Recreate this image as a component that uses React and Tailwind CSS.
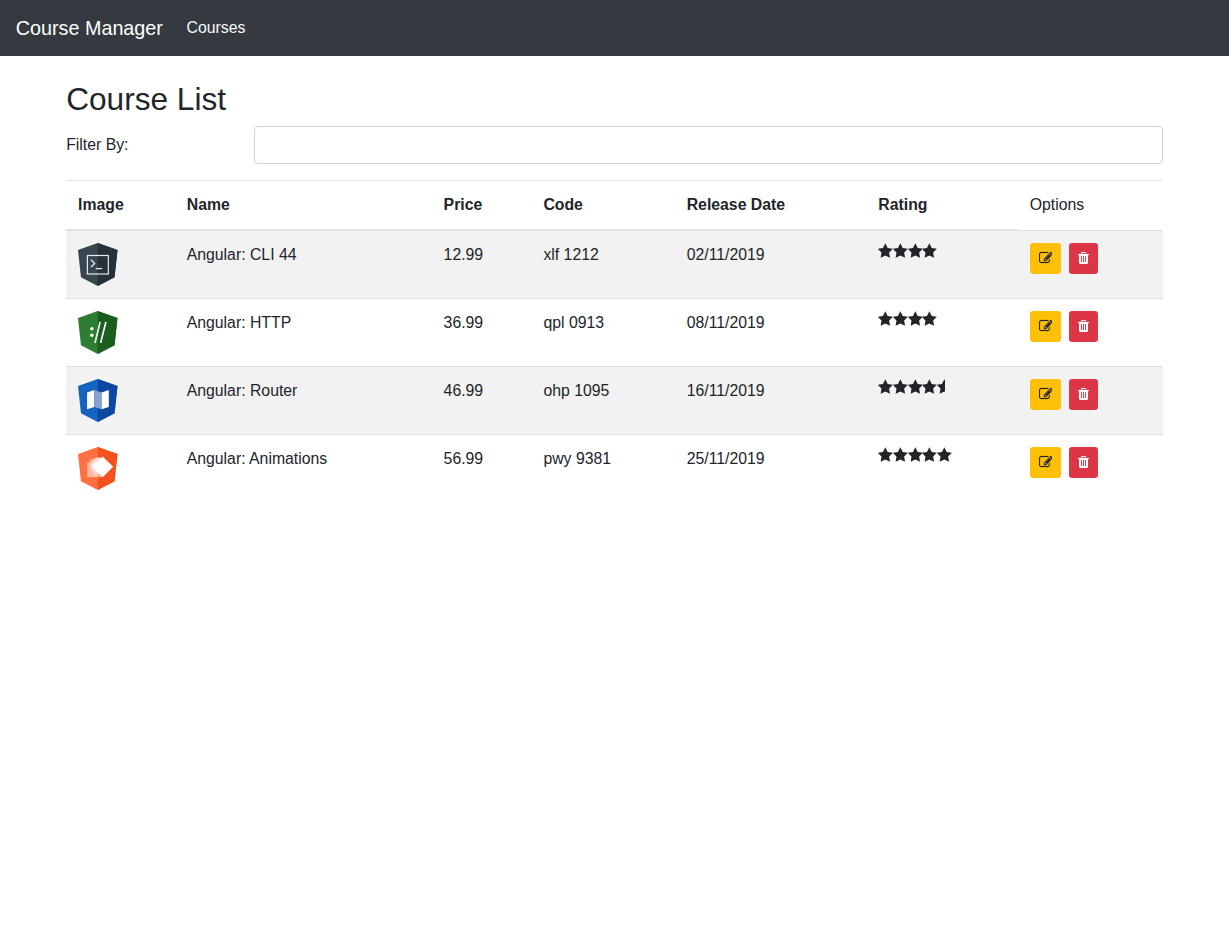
import React from "react";

const EDIT =
  "M888 1184l116-116-152-152-116 116v56h96v96h56zm440-720q-16-16-33 1l-350 350q-17 17-1 33t33-1l350-350q17-17 1-33zm80 594v190q0 119-84.5 203.5t-203.5 84.5h-832q-119 0-203.5-84.5t-84.5-203.5v-832q0-119 84.5-203.5t203.5-84.5h832q63 0 117 25 15 7 18 23 3 17-9 29l-49 49q-14 14-32 8-23-6-45-6h-832q-66 0-113 47t-47 113v832q0 66 47 113t113 47h832q66 0 113-47t47-113v-126q0-13 9-22l64-64q15-15 35-7t20 29zm-96-738l288 288-672 672h-288v-288zm444 132l-92 92-288-288 92-92q28-28 68-28t68 28l152 152q28 28 28 68t-28 68z";
const TRASH =
  "M704 1376v-704q0-14-9-23t-23-9h-64q-14 0-23 9t-9 23v704q0 14 9 23t23 9h64q14 0 23-9t9-23zm256 0v-704q0-14-9-23t-23-9h-64q-14 0-23 9t-9 23v704q0 14 9 23t23 9h64q14 0 23-9t9-23zm256 0v-704q0-14-9-23t-23-9h-64q-14 0-23 9t-9 23v704q0 14 9 23t23 9h64q14 0 23-9t9-23zm-544-992h448l-48-117q-7-9-17-11h-317q-10 2-17 11zm928 32v64q0 14-9 23t-23 9h-96v948q0 83-47 143.5t-113 60.5h-832q-66 0-113-58.5t-47-141.5v-952h-96q-14 0-23-9t-9-23v-64q0-14 9-23t23-9h309l70-167q15-37 54-63t79-26h320q40 0 79 26t54 63l70 167h309q14 0 23 9t9 23z";
const STAR =
  "M832 20L1100 555L1690 640L1265 1070L1365 1670L832 1395L299 1670L399 1070L-26 640L564 555Z";

function Shield({ left, right, children }) {
  return (
    <svg width="39.5" height="43" viewBox="0 0 40 43" preserveAspectRatio="none" className="block">
      <path d="M20 0L0 7L3 34.2L20 43L37 34.2L40 7Z" fill={left} />
      <path d="M20 0L40 7L37 34.2L20 43Z" fill={right} />
      {children}
    </svg>
  );
}

const logos = {
  cli: (
    <Shield left="#37474f" right="#263238">
      <rect x="9.5" y="12.5" width="21.2" height="18.5" fill="none" stroke="#e8eaeb" strokeWidth="1.2" />
      <path d="M13.2 16.8L16.8 20.4L13.2 24" fill="none" stroke="#e0e3e5" strokeWidth="1.4" />
      <path d="M18 25.6H24.5" stroke="#e0e3e5" strokeWidth="1.3" />
    </Shield>
  ),
  http: (
    <Shield left="#2e7d32" right="#1b5e20">
      <circle cx="14" cy="17.7" r="1.8" fill="#fff" />
      <circle cx="14" cy="24.3" r="1.8" fill="#fff" />
      <path d="M22.4 11L17.2 32M28.2 11L22.9 32" fill="none" stroke="#fff" strokeWidth="1.6" />
    </Shield>
  ),
  router: (
    <Shield left="#1565c0" right="#0d47a1">
      <path d="M9.2 13.4L16.4 11V28L9.2 30.2Z" fill="#fff" />
      <path d="M16.4 11L24 13.4V30.2L16.4 28Z" fill="#86a3d0" />
      <path d="M24 13.4L31.2 11V28L24 30.2Z" fill="#fff" />
    </Shield>
  ),
  animations: (
    <Shield left="#ff7043" right="#f4511e">
      <rect x="9.3" y="15.3" width="15" height="14.8" fill="#fff" opacity="0.5" />
      <path d="M11 13L22 11L27 26L16 28.5Z" fill="#fff" opacity="0.3" />
      <path d="M13.5 11.8L22 10.2L28 14L20 28L13.5 22Z" fill="#fff" opacity="0.35" />
      <path d="M17 11L22 10L25 13L17 22L14.2 20Z" fill="#fff" opacity="0.5" />
      <path d="M25 9.5L35.6 19.8L25 30.2L14.3 19.8Z" fill="#fff" />
    </Shield>
  ),
};

const courses = [
  { logo: "cli", name: "Angular: CLI 44", price: "12.99", code: "xlf 1212", date: "02/11/2019", rating: 4 },
  { logo: "http", name: "Angular: HTTP", price: "36.99", code: "qpl 0913", date: "08/11/2019", rating: 4 },
  { logo: "router", name: "Angular: Router", price: "46.99", code: "ohp 1095", date: "16/11/2019", rating: 4.5 },
  { logo: "animations", name: "Angular: Animations", price: "56.99", code: "pwy 9381", date: "25/11/2019", rating: 5 },
];

function Stars({ rating }) {
  return (
    <div className="overflow-hidden" style={{ width: rating * 14.72 }}>
      <div className="flex w-[75px]">
        {[0, 1, 2, 3, 4].map((i) => (
          <svg key={i} className="h-[15px] w-[14.67px] shrink-0" viewBox="0 0 1664 1690" preserveAspectRatio="none" fill="#212529">
            <path d={STAR} />
          </svg>
        ))}
      </div>
    </div>
  );
}

const headings = ["Image", "Name", "Price", "Code", "Release Date", "Rating"];

export default function App() {
  return (
    <div className="min-h-[930px] bg-white font-['Liberation_Sans',Arial,sans-serif] text-[15.8px] leading-6 text-[#212529]">
      <nav className="flex h-14 items-center bg-[#343a40] px-[15.8px] text-[#f8f9fa]">
        <a className="mr-[23.7px] text-[19.75px] leading-[30px] text-white">Course Manager</a>
        <a className="leading-6">Courses</a>
      </nav>
      <main className="mr-[66px] ml-[66.2px] pt-6">
        <h2 className="mb-2 text-[31.6px] leading-[38px] font-medium">Course List</h2>
        <div className="mb-4 flex items-center">
          <label className="w-[187.8px]">Filter By:</label>
          <input type="text" className="h-[38px] flex-1 rounded border border-[#ced4da] bg-white px-3 outline-none" />
        </div>
        <table className="w-full table-fixed border-separate border-spacing-0 text-left">
          <colgroup>
            <col className="w-[108.7px]" />
            <col className="w-[256.9px]" />
            <col className="w-[99.8px]" />
            <col className="w-[143.3px]" />
            <col className="w-[191.6px]" />
            <col className="w-[151.4px]" />
            <col />
          </colgroup>
          <thead>
            <tr className="h-[50px]">
              {headings.map((h) => (
                <th key={h} className="border-y border-[#dee2e6] px-[11.85px] py-0 align-middle font-bold">{h}</th>
              ))}
              <td className="border-t border-[#dee2e6] px-[11.85px] pt-3 pb-0 align-top">Options</td>
            </tr>
          </thead>
          <tbody className="[&_td]:border-t [&_td]:border-[#dee2e6] [&_td]:px-[11.85px] [&_td]:pt-3 [&_td]:pb-0 [&_td]:align-top">
            {courses.map((c) => (
              <tr key={c.logo} className="h-[68px] odd:bg-[#f2f2f2]">
                <td>{logos[c.logo]}</td>
                <td>{c.name}</td>
                <td>{c.price}</td>
                <td>{c.code}</td>
                <td>{c.date}</td>
                <td><Stars rating={c.rating} /></td>
                <td>
                  <div className="flex gap-[7.9px]">
                    <button aria-label="Edit" className="flex h-[31px] w-[31.6px] items-center justify-center rounded-[3.2px] bg-[#ffc107] pb-px">
                      <svg width="13.8" height="14" viewBox="0 0 1792 1792" preserveAspectRatio="none" fill="#212529" stroke="#212529" strokeWidth="25"><path d={EDIT} /></svg>
                    </button>
                    <button aria-label="Delete" className="flex h-[31px] w-[28.6px] items-center justify-center rounded-[3.2px] bg-[#dc3545] pb-px">
                      <svg width="11" height="14" viewBox="192 0 1408 1792" preserveAspectRatio="none" fill="#fff" stroke="#fff" strokeWidth="10"><path d={TRASH} /></svg>
                    </button>
                  </div>
                </td>
              </tr>
            ))}
          </tbody>
        </table>
      </main>
    </div>
  );
}
